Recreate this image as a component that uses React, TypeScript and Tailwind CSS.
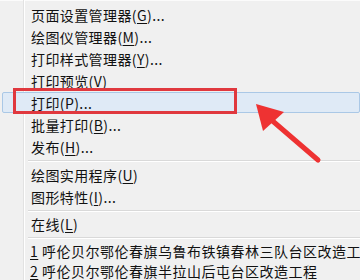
import React from "react";

const font = { fontFamily: '"Noto Sans CJK SC", "Noto Sans", sans-serif' };

function Item({ label, mn, tail = "", highlight = false }: { label: string; mn: string; tail?: string; highlight?: boolean }) {
  return (
    <div className="relative flex h-[22px] items-center">
      {highlight && (
        <div className="absolute left-[2px] right-0 top-[0px] bottom-[1px] rounded-[2px] border border-[#aac8e6] bg-[#dfeaf6]" />
      )}
      <div className="relative pl-[31px] text-[14px] tracking-[0.4px] text-[#111] whitespace-nowrap leading-none" style={font}>
        {label}(<span className="underline underline-offset-2">{mn}</span>){tail}
      </div>
    </div>
  );
}

function Recent({ n, text }: { n: string; text: string }) {
  return (
    <div className="flex h-[20px] items-center">
      <div className="pl-[30px] text-[14px] tracking-[0.5px] text-[#111] whitespace-nowrap leading-none" style={font}>
        <span className="underline underline-offset-2">{n}</span> {text}
      </div>
    </div>
  );
}

function Sep({ h }: { h: string }) {
  return (
    <div className={`flex flex-col justify-center ${h}`}>
      <div className="ml-[28px] h-px bg-[#d9d9d9]" />
      <div className="ml-[28px] h-px bg-white" />
    </div>
  );
}

export default function App() {
  return (
    <div className="relative h-[280px] w-[360px] overflow-hidden bg-[#f0f0f0]">
      <div className="absolute left-[23px] top-0 bottom-0 w-px bg-[#e2e2e2]" />
      <div className="absolute left-[24px] top-0 bottom-0 w-px bg-white" />
      <div className="h-px bg-[#fbfbfb]" />
      <div className="relative flex flex-col pt-[3px]">
        <Item label="页面设置管理器" mn="G" tail="..." />
        <Item label="绘图仪管理器" mn="M" tail="..." />
        <Item label="打印样式管理器" mn="Y" tail="..." />
        <Item label="打印预览" mn="V" />
        <Item label="打印" mn="P" tail="..." highlight />
        <Item label="批量打印" mn="B" tail="..." />
        <Item label="发布" mn="H" tail="..." />
        <Sep h="h-[6px]" />
        <Item label="绘图实用程序" mn="U" />
        <Item label="图形特性" mn="I" tail="..." />
        <Sep h="h-[5px]" />
        <Item label="在线" mn="L" />
        <Sep h="h-[6px]" />
        <Recent n="1" text="呼伦贝尔鄂伦春旗乌鲁布铁镇春林三队台区改造工程" />
        <Recent n="2" text="呼伦贝尔鄂伦春旗半拉山后屯台区改造工程" />
      </div>
      <div className="absolute left-[13px] top-[88px] h-[26px] w-[224px] border-[3px] border-[#e0383e]" />
      <svg className="absolute left-0 top-0" width="360" height="280" viewBox="0 0 360 280">
        <line x1="318" y1="160" x2="268" y2="117" stroke="#ee3232" strokeWidth="5" strokeLinecap="round" />
        <polygon points="256,104 284,112 263,131" fill="#ee3232" />
      </svg>
    </div>
  );
}
